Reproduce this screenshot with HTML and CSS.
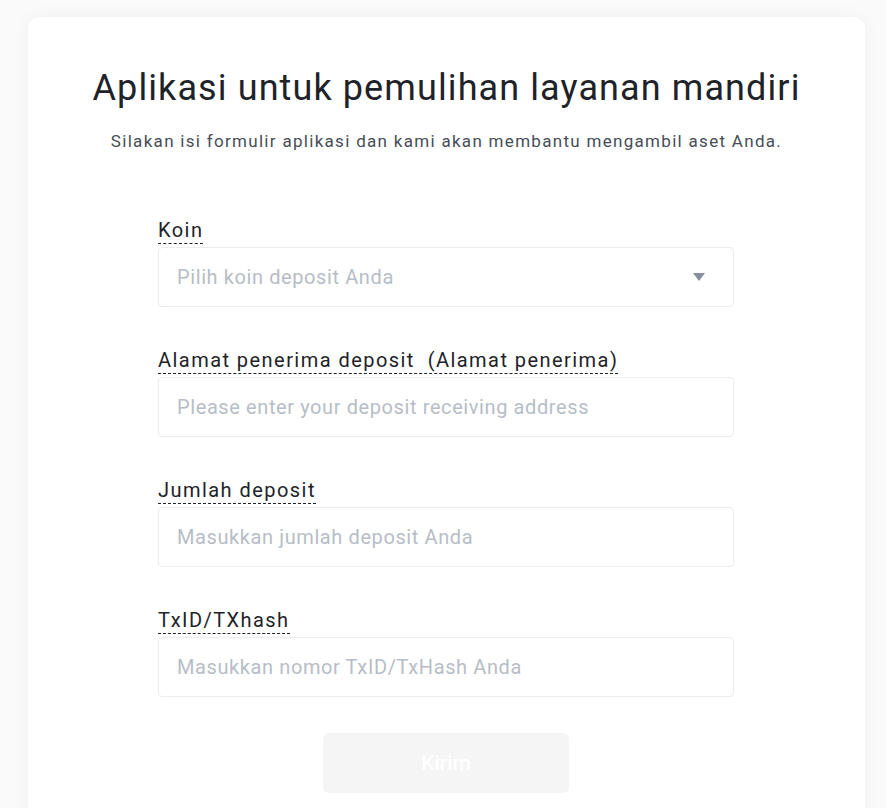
FILE: index.html
```html
<!DOCTYPE html>
<html lang="id">
<head>
    <meta charset="UTF-8">
    <meta name="viewport" content="width=device-width, initial-scale=1.0">
    <title>Aplikasi untuk pemulihan layanan mandiri</title>
    <link rel="stylesheet" href="styles.css">
</head>
<body>

    <div class="page">
        <div class="card">
            <h1 class="title">Aplikasi untuk pemulihan layanan mandiri</h1>
            <p class="subtitle">Silakan isi formulir aplikasi dan kami akan membantu mengambil aset Anda.</p>

            <form class="form">
                <div class="field">
                    <div class="label-row"><span class="label">Koin</span></div>
                    <div class="input select">
                        <span class="placeholder">Pilih koin deposit Anda</span>
                        <svg class="caret" width="12" height="8" viewBox="0 0 12 8">
                            <path d="M0 0h12L6 8z" fill="#848E9C"/>
                        </svg>
                    </div>
                </div>

                <div class="field">
                    <div class="label-row"><span class="label">Alamat penerima deposit &nbsp;(Alamat penerima)</span></div>
                    <div class="input">
                        <span class="placeholder">Please enter your deposit receiving address</span>
                    </div>
                </div>

                <div class="field">
                    <div class="label-row"><span class="label">Jumlah deposit</span></div>
                    <div class="input">
                        <span class="placeholder">Masukkan jumlah deposit Anda</span>
                    </div>
                </div>

                <div class="field">
                    <div class="label-row"><span class="label">TxID/TXhash</span></div>
                    <div class="input">
                        <span class="placeholder">Masukkan nomor TxID/TxHash Anda</span>
                    </div>
                </div>

                <div class="actions">
                    <button type="button" class="submit">Kirim</button>
                </div>
            </form>
        </div>
    </div>

</body>
</html>
```

FILE: styles.css
```css
body {
    margin: 0;
    padding: 0;
    background-color: #fafafa;
    font-family: Roboto, "Liberation Sans", sans-serif;
    color: #1e2329;
}

*,
*::before,
*::after {
    box-sizing: border-box;
}

.page {
    padding: 17px 21px 0 28px;
    height: 808px;
    overflow: hidden;
}

.card {
    background-color: #fff;
    border-radius: 12px;
    box-shadow: 0 0 20px rgba(0, 0, 0, 0.04);
    padding: 45px 0 40px;
    text-align: center;
}

.title {
    margin: 0;
    font-size: 36px;
    line-height: 52px;
    font-weight: 400;
    letter-spacing: 1.1px;
    color: #1e2329;
}

.subtitle {
    margin: 15px 0 0;
    font-size: 17px;
    line-height: 24px;
    color: #474d57;
    letter-spacing: 1.3px;
}

.form {
    width: 576px;
    margin: 64px 0 0 130px;
    text-align: left;
    display: flex;
    flex-direction: column;
    gap: 40px;
}

.label-row {
    height: 30px;
}

.label {
    display: inline-block;
    font-size: 20px;
    line-height: 26px;
    letter-spacing: 1.45px;
    color: #1e2329;
    border-bottom: 1px dashed #1e2329;
}

.input {
    height: 60px;
    border: 1px solid #eaecef;
    border-radius: 4px;
    padding: 0 18px;
    display: flex;
    align-items: center;
    justify-content: space-between;
}

.placeholder {
    font-size: 20px;
    color: #b7bdc6;
    letter-spacing: 0.6px;
}

.caret {
    margin-right: 10px;
}

.actions {
    display: flex;
    justify-content: center;
    margin-top: -4px;
}

.submit {
    width: 246px;
    height: 60px;
    border: 0;
    border-radius: 6px;
    background-color: #f5f5f5;
    color: #fff;
    font-family: Roboto, sans-serif;
    font-size: 21px;
    font-weight: 500;
}
```
